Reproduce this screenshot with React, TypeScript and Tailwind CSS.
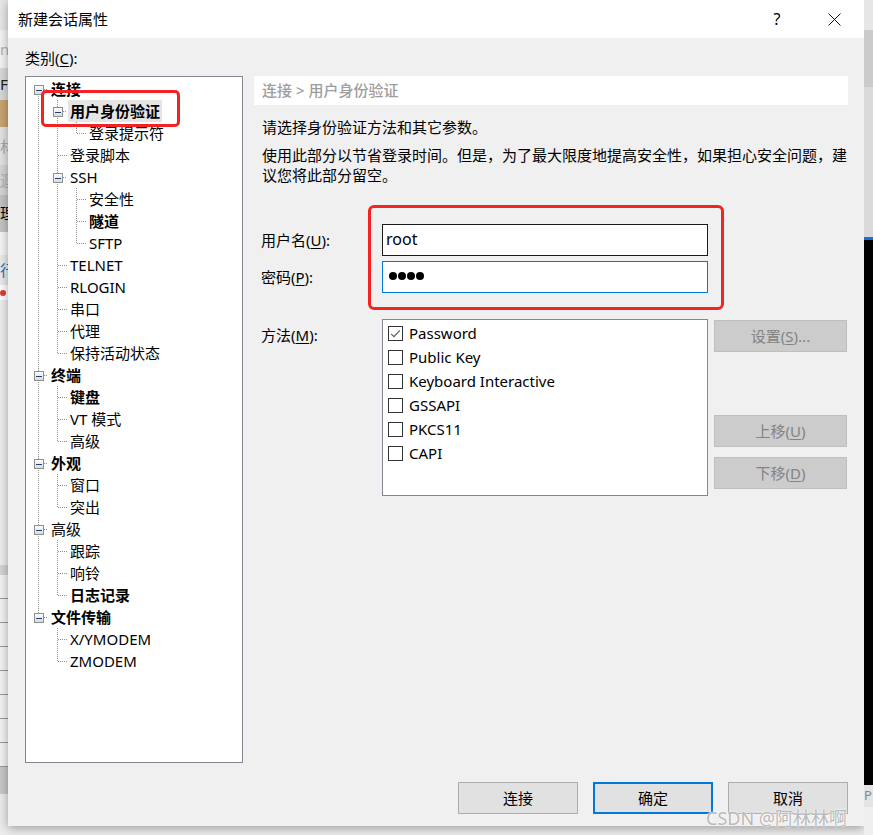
import React from 'react';

interface TreeNode {
  label: string;
  bold?: boolean;
  selected?: boolean;
  children?: TreeNode[];
}

interface FlatRow {
  node: TreeNode;
  level: number;
  lasts: boolean[];
  first: boolean;
}

const tree: TreeNode[] = [
  {
    label: '连接',
    bold: true,
    children: [
      { label: '用户身份验证', bold: true, selected: true, children: [{ label: '登录提示符' }] },
      { label: '登录脚本' },
      { label: 'SSH', children: [{ label: '安全性' }, { label: '隧道', bold: true }, { label: 'SFTP' }] },
      { label: 'TELNET' },
      { label: 'RLOGIN' },
      { label: '串口' },
      { label: '代理' },
      { label: '保持活动状态' },
    ],
  },
  { label: '终端', bold: true, children: [{ label: '键盘', bold: true }, { label: 'VT 模式' }, { label: '高级' }] },
  { label: '外观', bold: true, children: [{ label: '窗口' }, { label: '突出' }] },
  { label: '高级', children: [{ label: '跟踪' }, { label: '响铃' }, { label: '日志记录', bold: true }] },
  { label: '文件传输', bold: true, children: [{ label: 'X/YMODEM' }, { label: 'ZMODEM' }] },
];

const flatten = (nodes: TreeNode[], level: number, lasts: boolean[], out: FlatRow[]) => {
  nodes.forEach((node, i) => {
    const isLast = i === nodes.length - 1;
    out.push({ node, level, lasts: [...lasts, isLast], first: level === 0 && i === 0 });
    if (node.children) flatten(node.children, level + 1, [...lasts, isLast], out);
  });
  return out;
};

const rows = flatten(tree, 0, [], []);

const LINE = '#909090';

// one indent column of the tree: dotted connectors and the [-] box
const Guide: React.FC<{ up?: boolean; down?: boolean; stub?: boolean; box?: boolean }> = ({
  up,
  down,
  stub,
  box,
}) => (
  <svg width="19" height="22" className="shrink-0" shapeRendering="crispEdges">
    {up && <line x1="9.5" y1="0" x2="9.5" y2="11" stroke={LINE} strokeDasharray="1 1" />}
    {down && <line x1="9.5" y1="12" x2="9.5" y2="22" stroke={LINE} strokeDasharray="1 1" />}
    {stub && <line x1={box ? 15 : 10} y1="11.5" x2="19" y2="11.5" stroke={LINE} strokeDasharray="1 1" />}
    {box && (
      <>
        <defs>
          <linearGradient id="bx" x1="0" y1="0" x2="0" y2="1">
            <stop offset="0" stopColor="#ffffff" />
            <stop offset="1" stopColor="#d8d8d8" />
          </linearGradient>
        </defs>
        <rect x="5.5" y="7.5" width="9" height="9" fill="url(#bx)" stroke="#8e8f8f" />
        <line x1="7" y1="12" x2="13" y2="12" stroke="#1f3f82" />
      </>
    )}
  </svg>
);

const TreeRow: React.FC<{ row: FlatRow }> = ({ row }) => {
  const { node, level, lasts, first } = row;
  const guides = [];
  for (let d = 0; d < level; d++) {
    guides.push(<Guide key={d} up={!lasts[d]} down={!lasts[d]} />);
  }
  return (
    <div className="flex h-[22px] items-center">
      {guides}
      <Guide up={!first} down={!lasts[level]} stub box={!!node.children} />
      <span
        className={`ml-px px-[2px] leading-[22px] whitespace-nowrap ${node.bold ? 'font-bold' : ''} ${
          node.selected ? 'bg-[#e5e5e5]' : ''
        }`}
      >
        {node.label}
      </span>
    </div>
  );
};

const Ul: React.FC<{ children: React.ReactNode }> = ({ children }) => <span className="underline underline-offset-2">{children}</span>;

const methods = ['Password', 'Public Key', 'Keyboard Interactive', 'GSSAPI', 'PKCS11', 'CAPI'];

const Checkbox: React.FC<{ checked?: boolean }> = ({ checked }) => (
  <span className="flex h-[15px] w-[15px] shrink-0 items-center justify-center border border-[#333333] bg-white">
    {checked && (
      <svg width="13" height="13" viewBox="0 0 13 13">
        <path d="M2.2 6.8 L5 9.6 L10.8 3.4" fill="none" stroke="#5a5a5a" strokeWidth="1.2" />
      </svg>
    )}
  </span>
);

const DisabledButton: React.FC<{ children: React.ReactNode; className?: string }> = ({ children, className }) => (
  <div
    className={`flex h-[32px] w-[133px] items-center justify-center border border-[#bfbfbf] bg-[#cccccc] text-[15px] text-[#838383] ${className ?? ''}`}
  >
    {children}
  </div>
);

const LeftStrip = () => (
  <div className="flex h-full w-[8px] shrink-0 flex-col overflow-hidden text-[15px] leading-none whitespace-nowrap">
    <div className="h-[30px] bg-[#e8e8e8]" />
    <div className="flex h-[38px] items-center bg-[#f4f4f4] text-[#b0b0b0]">ne</div>
    <div className="flex h-[32px] items-center bg-[#dadada] text-[#222]">F</div>
    <div className="h-[27px] bg-[#c9a470]" />
    <div className="flex h-[38px] items-center bg-[#e3e3e3] text-[#a8a8a8]">材</div>
    <div className="flex h-[30px] items-center bg-[#d6d6d6] text-[#b0b0b0]">迴</div>
    <div className="flex h-[37px] items-center bg-[#c4c4c4] text-black">理</div>
    <div className="h-[23px] bg-[#f6f6f6]" />
    <div className="flex h-[30px] items-center bg-[#ebebeb] text-[#2b6bc4]">行</div>
    <div className="flex h-[15px] items-center bg-white">
      <span className="h-[6px] w-[6px] rounded-full bg-[#e23b3b]" />
    </div>
    <div className="h-[265px] bg-[#eeeeee]" />
    <div className="h-[10px] bg-[#d4d4d4]" />
    {Array.from({ length: 8 }).map((_, i) => (
      <div key={i} className="h-[24px] border-b border-[#9a9a9a] bg-[#f3f3f3]" />
    ))}
    <div className="h-[27px] bg-[#c9c9c9]" />
    <div className="flex-1 bg-[#ececec]" />
  </div>
);

const RightStrip = () => (
  <div className="flex h-full w-[9px] shrink-0 flex-col overflow-hidden">
    <div className="h-[30px] bg-[#e6e6e6]" />
    <div className="h-[57px] bg-[#cbcbcb]" />
    <div className="h-[150px] bg-[#dadada]" />
    <div className="h-[3px] bg-[#1a6fd8]" />
    <div className="h-[545px] bg-black" />
    <div className="flex h-[22px] items-center bg-[#e4e4e4] text-[13px] text-[#888]">P</div>
    <div className="flex-1 bg-[#efefef]" />
  </div>
);

export default function App() {
  return (
    <div className="relative flex h-[835px] w-[873px] overflow-hidden bg-[#ececec] font-['Noto_Sans','Noto_Sans_CJK_SC',sans-serif] text-[15px] text-black">
      <LeftStrip />

      <div className="flex h-[826px] w-[856px] shrink-0 flex-col bg-[#f0f0f0] shadow-[0_2px_10px_rgba(0,0,0,0.35)]">
        {/* title bar */}
        <div className="flex h-[38px] items-center bg-white pr-[7px]">
          <span className="pl-[10px] text-[15px]">新建会话属性</span>
          <span className="ml-auto w-[20px] text-center text-[16px]">?</span>
          <span className="ml-[24px] flex h-[38px] w-[46px] items-center justify-center">
            <svg width="13" height="13" viewBox="0 0 13 13">
              <path d="M0.5 0.5 L12.5 12.5 M12.5 0.5 L0.5 12.5" stroke="#111" strokeWidth="1" />
            </svg>
          </span>
        </div>

        <div className="flex flex-1 flex-col pt-[10px] pr-[16px] pl-[17px]">
          <div className="leading-[20px]">
            类别(<Ul>C</Ul>):
          </div>

          <div className="mt-[8px] flex gap-[11px]">
            {/* category tree */}
            <div className="relative h-[687px] w-[218px] shrink-0 border border-[#828790] bg-white pt-px pl-[3px]">
              {rows.map((row, i) => (
                <TreeRow key={i} row={row} />
              ))}
              <div className="absolute top-[13px] left-[15px] h-[37px] w-[139px] rounded-[5px] border-[3px] border-[#f42323]" />
            </div>

            {/* settings panel */}
            <div className="relative w-[594px] shrink-0">
              <div className="flex h-[29px] items-center bg-white pl-[8px] font-medium text-[#9d9d9d]">
                连接 &gt; 用户身份验证
              </div>
              <p className="mt-[12px] pl-[8px] leading-[20px]">请选择身份验证方法和其它参数。</p>
              <p className="mt-[8px] pl-[8px] leading-[20px] whitespace-nowrap">
                使用此部分以节省登录时间。但是，为了最大限度地提高安全性，如果担心安全问题，建
                <br />
                议您将此部分留空。
              </p>

              <div className="mt-[39px] flex items-center">
                <label className="w-[128px] shrink-0 pl-[7px]">
                  用户名(<Ul>U</Ul>):
                </label>
                <div className="flex h-[32px] w-[326px] items-center border border-[#1a1a1a] bg-white pb-[3px] pl-[3px] text-[16px]">
                  root
                </div>
              </div>
              <div className="mt-[5px] flex items-center">
                <label className="w-[128px] shrink-0 pl-[7px]">
                  密码(<Ul>P</Ul>):
                </label>
                <div className="flex h-[32px] w-[326px] items-center gap-[1px] border border-[#0078d7] bg-white pb-[2px] pl-[6px]">
                  {[0, 1, 2, 3].map((i) => (
                    <span key={i} className="h-[8px] w-[8px] rounded-full bg-black" />
                  ))}
                </div>
              </div>

              <div className="mt-[26px] flex items-start">
                <label className="w-[128px] shrink-0 pt-[6px] pl-[7px] leading-[20px]">
                  方法(<Ul>M</Ul>):
                </label>
                <div className="h-[177px] w-[326px] shrink-0 border border-[#828790] bg-white pt-px pl-[5px]">
                  {methods.map((m, i) => (
                    <div key={m} className="flex h-[24px] items-center gap-[6px]">
                      <Checkbox checked={i === 0} />
                      <span className="leading-none">{m}</span>
                    </div>
                  ))}
                </div>
                <div className="ml-[6px] flex flex-col">
                  <DisabledButton className="mt-px">
                    设置(<Ul>S</Ul>)...
                  </DisabledButton>
                  <DisabledButton className="mt-[63px]">
                    上移(<Ul>U</Ul>)
                  </DisabledButton>
                  <DisabledButton className="mt-[10px]">
                    下移(<Ul>D</Ul>)
                  </DisabledButton>
                </div>
              </div>

              <div className="absolute top-[129px] left-[114px] h-[105px] w-[356px] rounded-[6px] border-[3px] border-[#f42323]" />
            </div>
          </div>

          {/* footer */}
          <div className="mt-[19px] flex justify-end gap-[15px]">
            <button className="flex h-[32px] w-[120px] items-center justify-center border border-[#adadad] bg-[#e1e1e1]">
              连接
            </button>
            <button className="flex h-[32px] w-[120px] items-center justify-center border-2 border-[#0078d7] bg-[#e1e1e1]">
              确定
            </button>
            <button className="flex h-[32px] w-[120px] items-center justify-center border border-[#adadad] bg-[#e1e1e1]">
              取消
            </button>
          </div>
        </div>
      </div>

      <RightStrip />

      <div className="absolute top-[806px] left-[706px] text-[18px] leading-[24px] whitespace-nowrap text-[#b8b8b8] [text-shadow:0_0_2px_#ffffff,0_0_1px_#ffffff]">
        CSDN @阿林林啊
      </div>
    </div>
  );
}
